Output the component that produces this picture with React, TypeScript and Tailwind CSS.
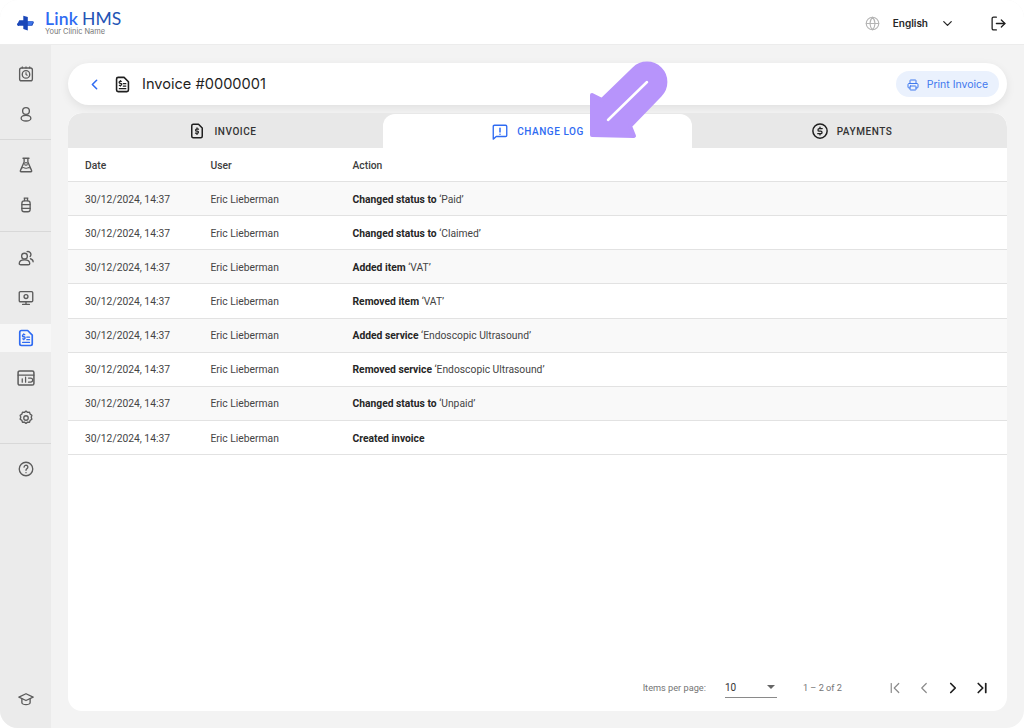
import type { ReactNode } from "react";
import { ChevronDown, ChevronFirst, ChevronLast, ChevronLeft, ChevronRight, Globe, LogOut, Printer } from "lucide-react";

const rows: { bold: string; rest?: string }[] = [
  { bold: "Changed status to", rest: "‘Paid’" },
  { bold: "Changed status to", rest: "‘Claimed’" },
  { bold: "Added item", rest: "‘VAT’" },
  { bold: "Removed item", rest: "‘VAT’" },
  { bold: "Added service", rest: "‘Endoscopic Ultrasound’" },
  { bold: "Removed service", rest: "‘Endoscopic Ultrasound’" },
  { bold: "Changed status to", rest: "‘Unpaid’" },
  { bold: "Created invoice" },
];

function Icon({ children, size = 18 }: { children: ReactNode; size?: number }) {
  return (
    <svg width={size} height={size} viewBox="0 0 24 24" fill="none" stroke="currentColor" strokeWidth={1.8} strokeLinecap="round" strokeLinejoin="round">
      {children}
    </svg>
  );
}

function InvoiceDollarIcon({ size = 18 }: { size?: number }) {
  return (
    <Icon size={size}>
      <path d="M4.500 5a2 2 0 0 1 2-2h7.500l5.500 5.500V19a2 2 0 0 1-2 2h-11a2 2 0 0 1-2-2z" strokeWidth={2} />
      <path d="M10.500 8H9a1.100 1.100 0 0 0 0 2.500h.7a1.100 1.100 0 0 1 0 2.500H8M9.300 7v1M9.300 13v1M13 11h3.200M13 14h3.200M8 17.300h8.200" strokeWidth={1.600} />
    </Icon>
  );
}

function SideItem({ children, active }: { children: ReactNode; active?: boolean }) {
  return (
    <div className={active ? "my-[6px] flex h-[28px] items-center justify-center bg-[#f7f7f7] text-[#2f6bf2]" : "flex h-[40px] items-center justify-center text-[#5c5c5c]"}>
      {children}
    </div>
  );
}

function Sidebar() {
  return (
    <aside className="flex w-[51px] shrink-0 flex-col bg-[#ebebeb] pt-[9px] pb-[9px]">
      <SideItem>
        <Icon>
          <rect x="3.500" y="4" width="17" height="17" rx="2.500" />
          <circle cx="12" cy="12.500" r="5" />
          <path d="M12 10.200v2.500l1.600 1M7 2.500v1.500M12 2.500v1.500M17 2.500v1.500" strokeWidth={1.500} />
        </Icon>
      </SideItem>
      <SideItem>
        <Icon>
          <circle cx="12" cy="8" r="4.500" />
          <ellipse cx="12" cy="17.500" rx="6.500" ry="3.800" />
        </Icon>
      </SideItem>
      <div className="my-[5px] h-px bg-[#d8d8d8]" />
      <SideItem>
        <Icon>
          <path d="M8 3h8M9.500 3v5L4.500 19.500A1 1 0 0 0 5.500 21h13a1 1 0 0 0 1-1.500L14.500 8V3" />
          <circle cx="12" cy="10.500" r="1.800" strokeWidth={1.400} />
          <path d="M6.500 16c2.500-2 4.500 1.500 7 .2 1.500-.8 2.500-1 3.700-.4" strokeWidth={1.400} />
        </Icon>
      </SideItem>
      <SideItem>
        <Icon>
          <path d="M9.500 2.800h5M10 3v3.200M14 3v3.200" />
          <rect x="6.500" y="6.500" width="11" height="14.500" rx="3" />
          <path d="M6.500 11.500h11M6.500 16.500h11" />
        </Icon>
      </SideItem>
      <div className="my-[6px] h-px bg-[#d8d8d8]" />
      <SideItem>
        <Icon>
          <circle cx="10" cy="9.500" r="3.800" />
          <path d="M3 19.500c0-3 3-5 7-5s7 2 7 5c0 1-1 1.500-2 1.500H5c-1 0-2-.5-2-1.500z" />
          <path d="M13.500 3.500a4 4 0 0 1 4 6.500M18 13c2 .7 3.500 2 3.500 4" />
        </Icon>
      </SideItem>
      <SideItem>
        <Icon>
          <rect x="3" y="3.500" width="18" height="13.500" rx="1.500" />
          <circle cx="12" cy="10" r="2.600" />
          <path d="M12 17v3.500M7.500 20.500h9" />
        </Icon>
      </SideItem>
      <SideItem active>
        <InvoiceDollarIcon size={20} />
      </SideItem>
      <SideItem>
        <Icon size={20}>
          <rect x="2.500" y="3.500" width="19" height="17" rx="2" />
          <path d="M2.500 8.500h19M7.500 17v-4M11.500 17v-6M15 12h2.500a1.500 1.500 0 0 1 0 5H15" strokeWidth={1.500} />
        </Icon>
      </SideItem>
      <SideItem>
        <Icon>
          <path d="M12 2.800l2 1.700 2.700-.2.800 2.600 2.300 1.500-.8 2.600.8 2.600-2.300 1.500-.8 2.600-2.700-.2-2 1.700-2-1.700-2.700.2-.8-2.600-2.300-1.500.8-2.600-.8-2.600 2.300-1.500.8-2.600 2.700.2z" />
          <circle cx="12" cy="12" r="3" />
        </Icon>
      </SideItem>
      <div className="my-[5px] h-px bg-[#d8d8d8]" />
      <SideItem>
        <Icon>
          <circle cx="12" cy="12" r="9" />
          <path d="M9.500 9.500a2.500 2.500 0 1 1 3.800 2.100c-.8.5-1.300 1-1.300 2" />
          <path d="M12 16.800v.1" />
        </Icon>
      </SideItem>
      <div className="mt-auto">
        <SideItem>
          <Icon>
            <path d="M2.500 9.500L12 5l9.500 4.500L12 14z" />
            <path d="M6.500 12v4.500c0 1.500 2.500 3 5.500 3s5.500-1.500 5.500-3V12" />
          </Icon>
        </SideItem>
      </div>
    </aside>
  );
}

function Tabs() {
  const tabClass = "flex items-center justify-center gap-[8px] pt-px font-['Roboto',sans-serif] text-[10px] font-medium tracking-[0.055em]";
  return (
    <div className="grid h-[35px] grid-cols-[315px_309px_1fr] rounded-t-[14px] bg-[#e8e8e8]">
      <div className={`${tabClass} pr-[6px] text-[#333333]`}>
        <span className="text-[#1f1f1f]">
          <Icon size={18}>
            <path d="M5 5a2 2 0 0 1 2-2h7l5 5v11a2 2 0 0 1-2 2H7a2 2 0 0 1-2-2z" strokeWidth={2} />
            <path d="M14 9.500h-2.500a1.300 1.300 0 0 0 0 2.700h1a1.300 1.300 0 0 1 0 2.700H10M12 8v1.500M12 15v1.500" strokeWidth={1.700} />
          </Icon>
        </span>
        INVOICE
      </div>
      <div className={`${tabClass} mt-px rounded-t-[12px] bg-white text-[#2f6bf2]`}>
        <Icon size={18}>
          <path d="M3 4.500A1.500 1.500 0 0 1 4.500 3h15A1.500 1.500 0 0 1 21 4.500v12a1.500 1.500 0 0 1-1.500 1.500H7l-4 3.500z" />
          <path d="M12 7v5M12 15v.1" strokeWidth={2} />
        </Icon>
        CHANGE LOG
      </div>
      <div className={`${tabClass} pl-[4px] text-[#333333]`}>
        <span className="text-[#1f1f1f]">
          <Icon size={18}>
            <circle cx="12" cy="12" r="9.500" strokeWidth={2} />
            <path d="M15 8.800h-4a1.700 1.700 0 0 0 0 3.400h2a1.700 1.700 0 0 1 0 3.400H9M12 6.800v2M12 15.600v1.600" strokeWidth={1.700} />
          </Icon>
        </span>
        PAYMENTS
      </div>
    </div>
  );
}

function Pager() {
  return (
    <div className="mt-auto flex h-[46px] items-center justify-end pr-[16px] font-['Roboto',sans-serif] text-[9.200px] text-[#757575]">
      <span>Items per page:</span>
      <div className="ml-[19px] flex h-[19px] w-[52px] items-center justify-between border-b border-[#8a8a8a] pb-px text-[#333333]">
        <span className="text-[10px]">10</span>
        <span className="mr-[2px] h-0 w-0 border-x-[4px] border-t-[4px] border-x-transparent border-t-[#666666]" />
      </div>
      <span className="ml-[26px]">1 – 2 of 2</span>
      <div className="ml-[44px] flex items-center gap-[11px]">
        <ChevronFirst size={18} strokeWidth={1.600} className="text-[#8a8a8a]" />
        <ChevronLeft size={18} strokeWidth={1.600} className="text-[#8a8a8a]" />
        <ChevronRight size={18} strokeWidth={2.300} className="text-[#1f1f1f]" />
        <ChevronLast size={18} strokeWidth={2.300} className="text-[#1f1f1f]" />
      </div>
    </div>
  );
}

export default function App() {
  return (
    <div className="relative h-[728px] w-full overflow-hidden bg-white">
      <div className="flex h-full flex-col overflow-hidden rounded-[18px] bg-[#f3f3f3]">
        <header className="flex h-[45px] shrink-0 items-center border-b border-[#ececec] bg-white pr-[17px] pl-[17px]">
          <svg width="18" height="19" viewBox="0 0 20 20" className="mt-[2px]">
            <path d="M7 1.500l5 1.200v4.800h5a1.500 1.500 0 0 1 1.500 2l-1.500 3h-5v5.200l-5-1.700v-3.500H2.500A1.500 1.500 0 0 1 1 9.500l1.500-3.200H7z" fill="#1a47b8" />
            <path d="M12 7.500l6 .5-2 4h-4z" fill="#3d74e8" />
          </svg>
          <div className="ml-[10px] flex flex-col font-['Lato',sans-serif]">
            <div className="mt-[1px] flex h-[18px] items-center text-[17.500px] leading-none">
              <span className="font-semibold tracking-[0.01em] text-[#2f6bf2]">Link</span>
              <span className="ml-[4px] text-[#2453b5]">HMS</span>
            </div>
            <span className="font-['Inter',sans-serif] text-[7.400px] leading-[7px] text-[#777777]">Your Clinic Name</span>
          </div>
          <div className="ml-auto flex items-center pt-[2px]">
            <Globe size={15} strokeWidth={1.800} className="text-[#b5b5b5]" />
            <span className="ml-[13px] font-['Inter',sans-serif] text-[10px] font-semibold text-[#262626]">English</span>
            <ChevronDown size={15} strokeWidth={2} className="ml-[12px] text-[#262626]" />
            <LogOut size={17} strokeWidth={1.800} className="ml-[35px] text-[#1f1f1f]" />
          </div>
        </header>
        <div className="flex min-h-0 flex-1">
          <Sidebar />
          <main className="flex min-w-0 flex-1 flex-col pt-[18px] pr-[17px] pb-[17px] pl-[17px]">
            <div className="flex h-[42px] shrink-0 items-center rounded-full bg-white pr-[8px] pl-[18px] shadow-[0_3px_10px_rgba(0,0,0,0.08)]">
              <ChevronLeft size={17} strokeWidth={2.200} className="text-[#2f6bf2]" />
              <span className="ml-[10px] text-[#1f1f1f]">
                <InvoiceDollarIcon size={19} />
              </span>
              <h1 className="ml-[10px] pt-px font-['Inter',sans-serif] text-[14.600px] font-normal text-[#1f1f1f]">Invoice #0000001</h1>
              <button className="ml-auto flex h-[26px] w-[103px] items-center justify-center gap-[8px] rounded-full bg-[#eaf1fd] pt-px font-['Inter',sans-serif] text-[10.500px] text-[#3f78ee]">
                <Printer size={12} strokeWidth={2} />
                Print Invoice
              </button>
            </div>
            <section className="mt-[8px] flex min-h-0 flex-1 flex-col overflow-hidden rounded-[14px] bg-white">
              <Tabs />
              <div className="grid h-[34px] grid-cols-[125.500px_142px_1fr] items-center border-b border-[#e2e2e2] pt-[2px] pl-[17px] font-['Roboto',sans-serif] text-[10.300px] font-medium text-[#3d3d3d]">
                <span>Date</span>
                <span>User</span>
                <span>Action</span>
              </div>
              {rows.map((row, i) => (
                <div
                  key={i}
                  className={`grid h-[34.150px] grid-cols-[125.500px_142px_1fr] items-center border-b border-[#e2e2e2] pt-[1.500px] pl-[17px] font-['Roboto',sans-serif] text-[10.300px] text-[#444444] ${i % 2 === 0 ? "bg-[#f9f9f9]" : "bg-white"}`}
                >
                  <span>30/12/2024, 14:37</span>
                  <span>Eric Lieberman</span>
                  <span>
                    <b className="font-bold text-[#262626]">{row.bold}</b>
                    {row.rest ? ` ${row.rest}` : ""}
                  </span>
                </div>
              ))}
              <Pager />
            </section>
          </main>
        </div>
      </div>
      {/* annotation arrow over the tabs */}
      <svg className="absolute top-[60px] left-[586px]" width="84" height="82" viewBox="586 60 84 82">
        <path
          d="M592 95L602 100L634 69A18 18 0 0 1 660 95L630 126L634 136L592 135Z"
          fill="#b794fb"
          stroke="#b794fb"
          strokeWidth={4}
          strokeLinejoin="round"
        />
        <path d="M647 82L608 120" stroke="#ffffff" strokeWidth={2.500} strokeLinecap="round" fill="none" />
      </svg>
    </div>
  );
}
